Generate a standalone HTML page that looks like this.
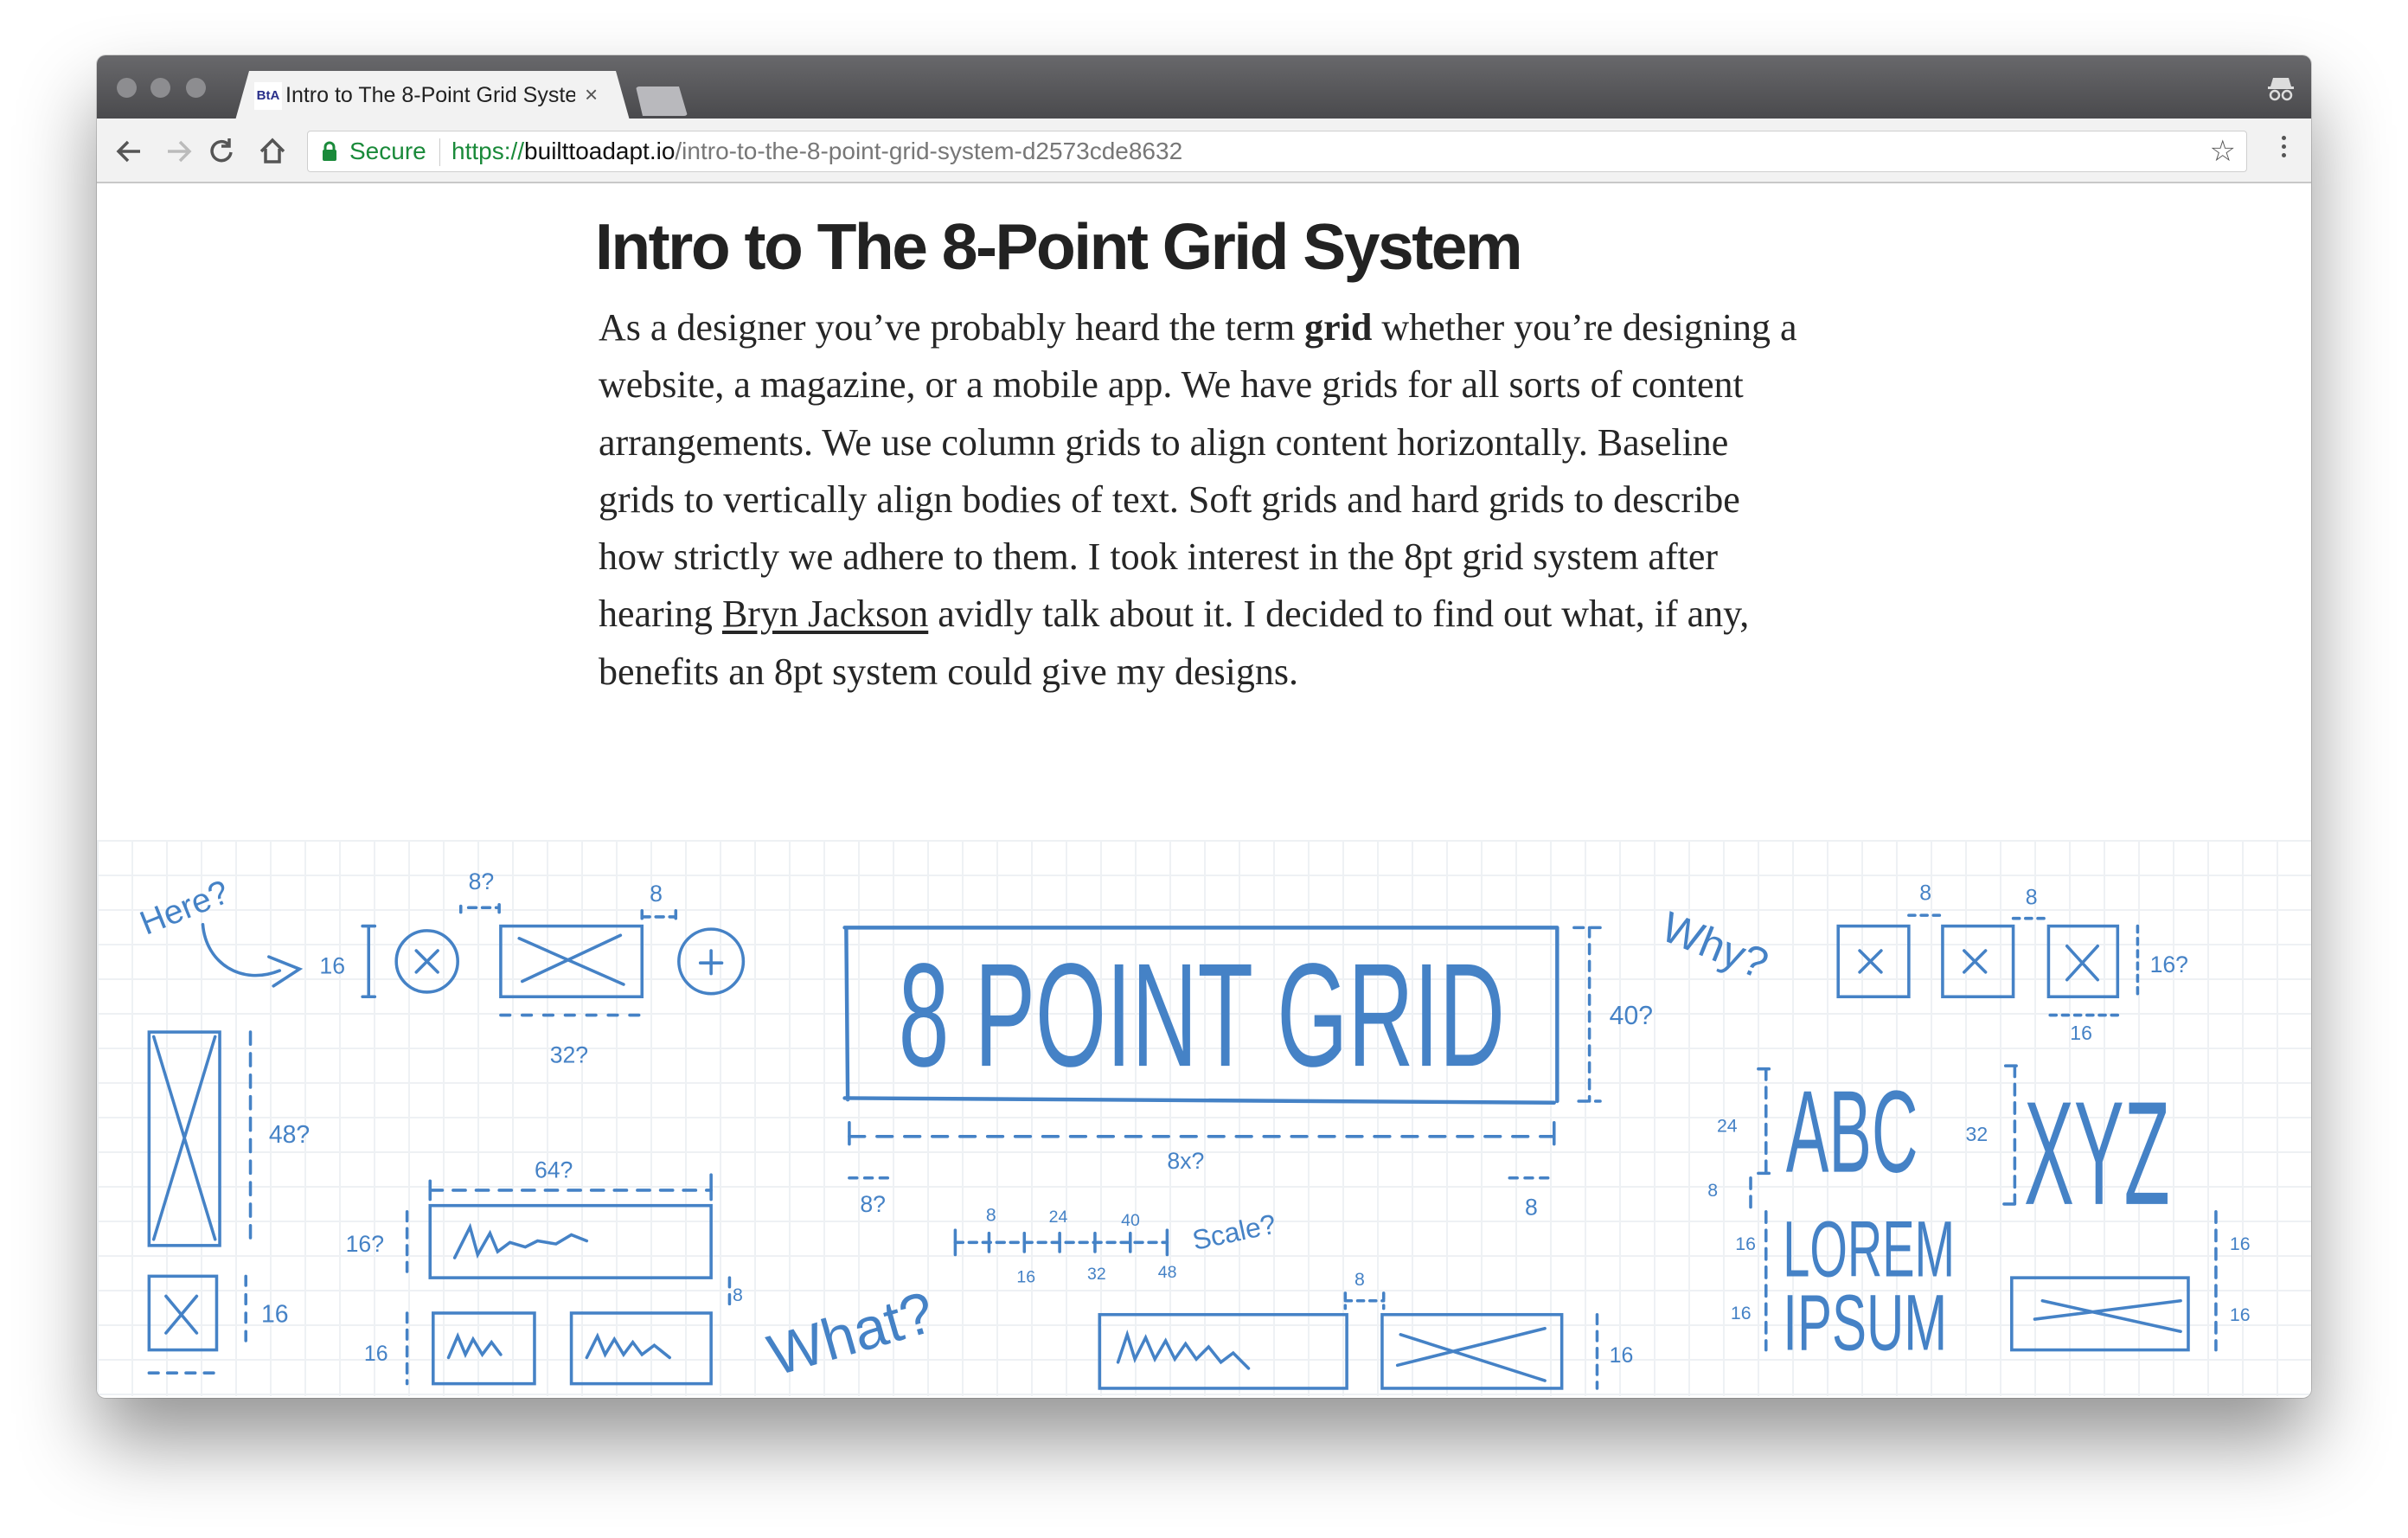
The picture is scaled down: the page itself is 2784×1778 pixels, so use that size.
<!DOCTYPE html>
<html><head><meta charset="utf-8"><style>
*{margin:0;padding:0;box-sizing:border-box}
body{width:2784px;height:1778px;background:#fff;position:relative;overflow:hidden;font-family:"Liberation Sans",sans-serif}
.win{position:absolute;left:112px;top:64px;width:2560px;height:1552px;border-radius:10px;overflow:hidden;background:#fff;box-shadow:0 50px 90px rgba(0,0,0,.42),0 0 0 1px rgba(0,0,0,.15)}
.tabbar{position:absolute;left:0;top:0;width:100%;height:73px;background:linear-gradient(#68686b,#4a4a4d)}
.dot{position:absolute;top:26px;width:23px;height:23px;border-radius:50%;background:#8d8d90}
.tab{position:absolute;left:160px;top:18px;width:456px;height:57px;background:#f2f2f2;clip-path:polygon(16px 0,440px 0,456px 57px,0 57px);}
.tab span{position:absolute;left:58px;top:14px;font-size:25px;color:#222;white-space:nowrap;width:335px;overflow:hidden}
.newtab{position:absolute;left:623px;top:36px;width:60px;height:34px;background:#b9b9bd;clip-path:polygon(0 0,50px 0,60px 34px,8px 34px);border-radius:4px}
.toolbar{position:absolute;left:0;top:73px;width:100%;height:75px;background:#f2f2f2;border-bottom:2px solid #c8c8c8}
.url{position:absolute;left:243px;top:14px;width:2243px;height:48px;background:#fff;border:1px solid #cfcfcf;border-radius:4px;font-size:28px;line-height:46px}
.content{position:absolute;left:0;top:148px;width:100%}
h1{position:absolute;left:576px;top:30px;font-size:75px;font-weight:bold;color:#222;letter-spacing:-2.5px;white-space:nowrap}
.p{position:absolute;left:580px;top:134px;font-family:"Liberation Serif",serif;font-size:44px;line-height:66.3px;color:#262626;white-space:nowrap}
.p u{text-decoration:underline;text-underline-offset:5px}
.sk{position:absolute;left:0;top:759px;width:2560px;height:643px;background-color:#fff;background-image:linear-gradient(90deg,#eef1f4 2px,transparent 2px),linear-gradient(#eef1f4 2px,transparent 2px);background-size:40px 40px;background-position:0 0}
</style></head><body>
<div class="win">
 <div class="tabbar">
  <div class="dot" style="left:23px"></div><div class="dot" style="left:62px"></div><div class="dot" style="left:103px"></div>
  <div class="tab"><div style="position:absolute;left:22px;top:13px;width:32px;height:32px;background:#fff;font-size:15px;font-weight:bold;color:#2a2f8a;line-height:32px;text-align:center">BtA</div><span>Intro to The 8-Point Grid Syste</span><div style="position:absolute;left:404px;top:12px;font-size:26px;color:#555">×</div></div>
  <div class="newtab"></div>
  <svg style="position:absolute;right:18px;top:22px" width="34" height="32" viewBox="0 0 34 32"><path d="M8 4h18l3 10H5z" fill="#ddd"/><rect x="2" y="14" width="30" height="3" fill="#ddd"/><circle cx="10" cy="24" r="5" stroke="#ddd" stroke-width="2.5" fill="none"/><circle cx="24" cy="24" r="5" stroke="#ddd" stroke-width="2.5" fill="none"/></svg>
 </div>
 <div class="toolbar">
  <svg style="position:absolute;left:20px;top:20px" width="300" height="36" viewBox="0 0 300 36" fill="none" stroke-width="3.5">
   <path d="M30 18H6M16 7 5 18l11 11" stroke="#555"/>
   <path d="M62 18h24M76 7l11 11-11 11" stroke="#bbb"/>
   <path d="M132 10a11 11 0 1 0 3 9M133 3v9h-9" stroke="#555"/>
   <path d="M170 18 183 5l13 13M175 15v15h16V15" stroke="#555"/>
  </svg>
  <div class="url">
   <svg style="position:absolute;left:16px;top:11px" width="18" height="24" viewBox="0 0 18 24"><path d="M4 11V7a5 5 0 0 1 10 0v4" stroke="#1a8a3a" stroke-width="3" fill="none"/><rect x="1" y="10" width="16" height="13" rx="2" fill="#1a8a3a"/></svg>
   <span style="position:absolute;left:48px;color:#1a8a3a">Secure</span>
   <div style="position:absolute;left:152px;top:8px;width:1px;height:32px;background:#ccc"></div>
   <span style="position:absolute;left:166px;white-space:nowrap"><span style="color:#1a8a3a">https://</span><span style="color:#111">builttoadapt.io</span><span style="color:#777">/intro-to-the-8-point-grid-system-d2573cde8632</span></span>
   <div style="position:absolute;right:12px;top:0;font-size:34px;color:#555">☆</div>
  </div>
  <div style="position:absolute;right:28px;top:14px;width:6px;font-size:0">
   <div style="width:5px;height:5px;border-radius:50%;background:#555;margin:6px 0 5px"></div><div style="width:5px;height:5px;border-radius:50%;background:#555;margin-bottom:5px"></div><div style="width:5px;height:5px;border-radius:50%;background:#555"></div>
  </div>
 </div>
 <div class="content">
  <h1>Intro to The 8-Point Grid System</h1>
  <div class="p">As a designer you’ve probably heard the term <b>grid</b> whether you’re designing a<br>website, a magazine, or a mobile app. We have grids for all sorts of content<br>arrangements. We use column grids to align content horizontally. Baseline<br>grids to vertically align bodies of text. Soft grids and hard grids to describe<br>how strictly we adhere to them. I took interest in the 8pt grid system after<br>hearing <u>Bryn Jackson</u> avidly talk about it. I decided to find out what, if any,<br>benefits an 8pt system could give my designs.</div>
  <div class="sk">
  <svg width="2560" height="643" viewBox="63 548 1442 362" fill="none" stroke="#4582c6" stroke-width="2" stroke-linecap="round">
   <g fill="#4582c6" stroke="none" font-family="Liberation Sans, sans-serif">
    <text x="95" y="610" font-size="22" transform="rotate(-22 95 610)">Here?</text>
    <text x="208" y="635" font-size="15">16</text>
    <text x="305" y="580" font-size="15">8?</text>
    <text x="423" y="588" font-size="15">8</text>
    <text x="358" y="693" font-size="15">32?</text>
    <text x="175" y="745" font-size="16">48?</text>
    <text x="348" y="768" font-size="15">64?</text>
    <text x="225" y="816" font-size="15">16?</text>
    <text x="170" y="862" font-size="16">16</text>
    <text x="237" y="887" font-size="14">16</text>
    <text x="477" y="848" font-size="12">8</text>
    <text x="505" y="897" font-size="38" transform="rotate(-16 505 897)">What?</text>
    <text x="585" y="695" font-size="96" textLength="395" lengthAdjust="spacingAndGlyphs">8 POINT GRID</text>
    <text x="1048" y="668" font-size="17">40?</text>
    <text x="760" y="762" font-size="15">8x?</text>
    <text x="560" y="790" font-size="15">8?</text>
    <text x="993" y="792" font-size="15">8</text>
    <text x="642" y="796" font-size="12">8</text><text x="683" y="797" font-size="11">24</text><text x="730" y="799" font-size="11">40</text>
    <text x="662" y="836" font-size="11">16</text><text x="708" y="834" font-size="11">32</text><text x="754" y="833" font-size="11">48</text>
    <text x="778" y="815" font-size="18" transform="rotate(-12 778 815)">Scale?</text>
    <text x="882" y="838" font-size="12">8</text>
    <text x="1048" y="888" font-size="14">16</text>
    <text x="1080" y="612" font-size="28" transform="rotate(22 1080 612)">Why?</text>
    <text x="1250" y="587" font-size="14">8</text><text x="1319" y="590" font-size="14">8</text>
    <text x="1400" y="634" font-size="15">16?</text>
    <text x="1348" y="678" font-size="13">16</text>
    <text x="1163" y="764" font-size="76" textLength="86" lengthAdjust="spacingAndGlyphs">ABC</text>
    <text x="1118" y="738" font-size="12">24</text>
    <text x="1280" y="744" font-size="13">32</text>
    <text x="1318" y="785" font-size="96" textLength="95" lengthAdjust="spacingAndGlyphs">XYZ</text>
    <text x="1112" y="780" font-size="12">8</text>
    <text x="1161" y="832" font-size="52" textLength="112" lengthAdjust="spacingAndGlyphs">LOREM</text>
    <text x="1161" y="880" font-size="52" textLength="107" lengthAdjust="spacingAndGlyphs">IPSUM</text>
    <text x="1130" y="815" font-size="12">16</text><text x="1127" y="860" font-size="12">16</text>
    <text x="1452" y="815" font-size="12">16</text><text x="1452" y="861" font-size="12">16</text>
   </g>
   <path d="M132 603c2 25 25 40 50 30M175 624l20 8-17 11"/>
   <path d="M240 604v46M236 604h8M236 650h8"/>
   <circle cx="278" cy="627" r="20"/><path d="M271 620l14 14M285 620l-14 14"/>
   <rect x="326" y="604" width="92" height="46"/><path d="M338 612l68 30M404 610l-64 30"/>
   <circle cx="463" cy="627" r="21"/><path d="M456 628h14M463 620v15"/>
   <path d="M300 595v-4 M305 592h20 M325 590v6 M418 598h22M418 594v6M440 594v6" stroke-dasharray="5 4"/>
   <path d="M326 662h92" stroke-dasharray="6 8"/>
   <rect x="97" y="673" width="46" height="139"/><path d="M100 676l40 132M140 676l-40 132"/>
   <path d="M163 673v139" stroke-dasharray="8 6"/>
   <rect x="97" y="832" width="44" height="48"/><path d="M108 845l20 24M128 845l-20 24"/>
   <path d="M160 832v48M97 895h48" stroke-dasharray="6 6"/>
   <path d="M280 776h183" stroke-dasharray="8 7"/><path d="M280 770v12M463 766v16"/>
   <rect x="280" y="786" width="183" height="47"/><path d="M296 820l10-20 5 18 8-14 5 12 8-6 10 3 8-4 12 2 10-6 10 4"/>
   <path d="M265 790v43M265 856v46M475 833v20" stroke-dasharray="6 5"/>
   <rect x="282" y="856" width="66" height="46"/><path d="M292 885l6-14 5 12 5-10 6 10 6-8 6 8"/>
   <rect x="372" y="856" width="91" height="46"/><path d="M382 885l7-14 5 12 6-10 6 10 6-8 6 8 8-6 10 8"/>
   <path d="M550 605h464M551 605l1 112M550 716l462 3M1014 605v113" stroke-width="2.5"/>
   <path d="M1025 605h17M1035 605v113M1028 718h14" stroke-dasharray="6 5"/>
   <path d="M553 741h459" stroke-dasharray="10 8"/><path d="M553 732v14M1012 732v14"/>
   <path d="M553 768h27M983 768h28" stroke-dasharray="5 5"/>
   <path d="M622 810h138" stroke-dasharray="5 4"/><path d="M622 802v16M644 804v12M667 804v12M690 804v12M713 804v12M736 804v12M760 802v16"/>
   <rect x="716" y="857" width="161" height="48"/><path d="M728 888l6-18 5 16 7-14 6 14 7-12 6 12 7-10 7 10 8-8 8 10 8-6 10 10"/>
   <path d="M876 848h25M876 843v10M901 843v10" stroke-dasharray="4 4"/>
   <rect x="900" y="857" width="117" height="48"/><path d="M910 890l96-24M912 870l94 30"/>
   <path d="M1040 857v48" stroke-dasharray="6 5"/>
   <rect x="1197" y="604" width="46" height="46"/><path d="M1211 620l14 14M1225 620l-14 14"/>
   <rect x="1265" y="604" width="46" height="46"/><path d="M1279 620l14 14M1293 620l-14 14"/>
   <rect x="1334" y="604" width="45" height="46"/><path d="M1346 617l20 22M1366 617l-20 22"/>
   <path d="M1243 597h22M1311 599h23M1392 604v46M1335 662h45" stroke-dasharray="4 4"/>
   <path d="M1150 697v68M1145 697h10M1145 765h10M1312 695v90M1306 695h12M1305 785h12M1140 768v20M1150 790v90M1443 790v90" stroke-dasharray="7 5"/>
   <rect x="1310" y="833" width="115" height="47"/><path d="M1325 860l95-12M1330 848l90 20"/>
  </svg>
  </div>
 </div>
</div>
</body></html>
